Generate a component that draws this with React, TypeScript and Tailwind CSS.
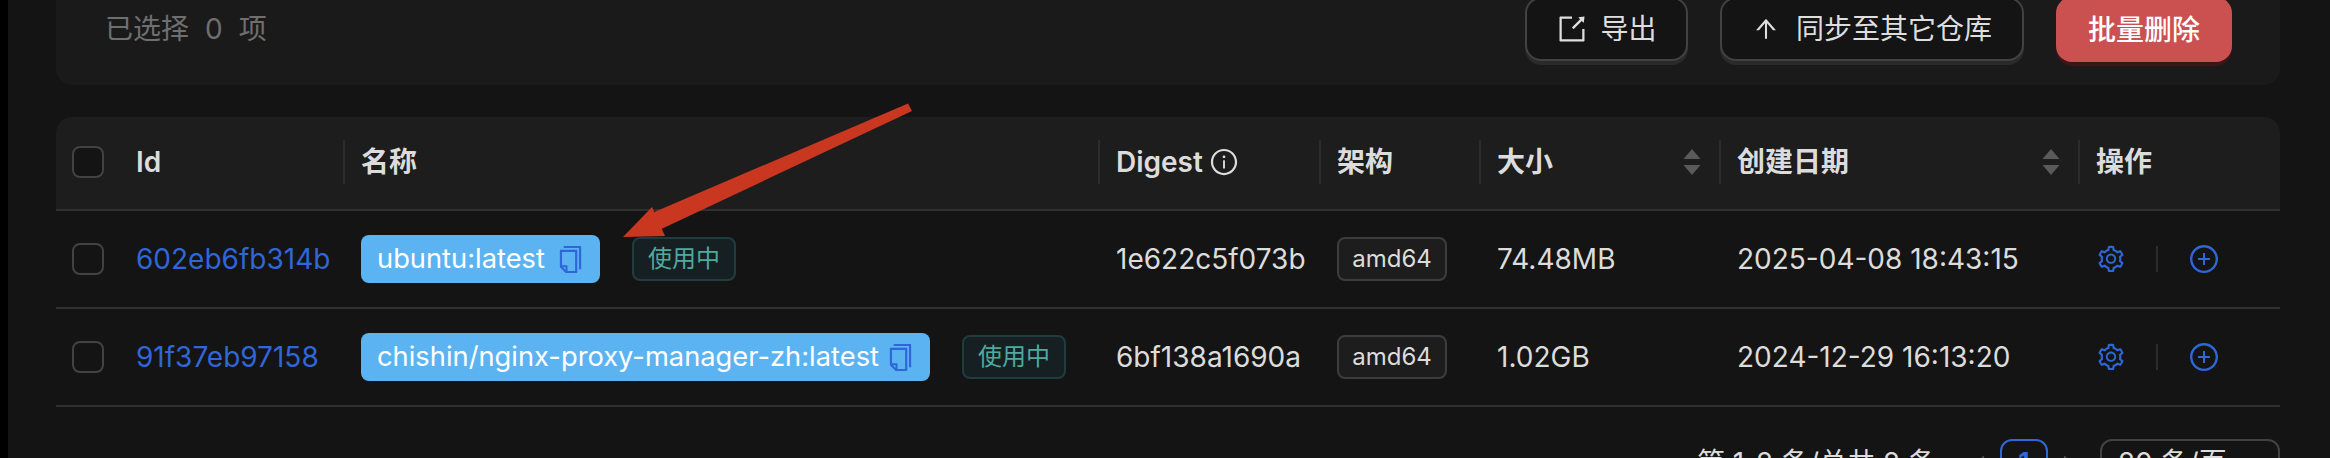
import React from "react";
import {
  AiOutlineArrowUp,
  AiOutlineCopy,
  AiOutlineDown,
  AiOutlineExport,
  AiOutlineInfoCircle,
  AiOutlineLeft,
  AiOutlinePlusCircle,
  AiOutlineRight,
  AiOutlineSetting,
} from "react-icons/ai";

const gridCols = "grid grid-cols-[80px_207px_755px_221px_160px_240px_359px_202px] items-center";

const images = [
  {
    id: "602eb6fb314b",
    name: "ubuntu:latest",
    tagGap: "gap-[10px]",
    digest: "1e622c5f073b",
    size: "74.48MB",
    created: "2025-04-08 18:43:15",
  },
  {
    id: "91f37eb97158",
    name: "chishin/nginx-proxy-manager-zh:latest",
    tagGap: "gap-[6px]",
    digest: "6bf138a1690a",
    size: "1.02GB",
    created: "2024-12-29 16:13:20",
  },
];

const Checkbox = () => (
  <div className="w-8 h-8 rounded-[8px] border-2 border-[#424242] bg-[#141414]" />
);

const SortCaret = () => (
  <svg width="18" height="26" viewBox="0 0 18 26" className="shrink-0">
    <path d="M9 0L17.5 10H.5z" fill="#5a5a5a" />
    <path d="M9 26L17.5 16H.5z" fill="#5a5a5a" />
  </svg>
);

const HeaderCell = ({ label, children }: { label: string; children?: React.ReactNode }) => (
  <div className="h-[44px] border-l-2 border-[#2c2c2c] pl-4 flex items-center justify-between pr-[18px]">
    <div className="flex items-center gap-[6px]">{label}</div>
    {children}
  </div>
);

const App: React.FC = () => {
  return (
    <div
      className="relative flex w-full h-[458px] overflow-hidden bg-[#141414] text-[28px] text-[#dcdcdc]"
      style={{ fontFamily: '"Inter", "Noto Sans CJK SC", sans-serif' }}
    >
      <div className="w-2 shrink-0 bg-black" />

      <main className="flex-1 pl-12 pr-[50px]">
        {/* Batch action bar */}
        <section className="-mt-[3px] h-[88px] bg-[#1a1a1a] rounded-b-[16px] pl-[49px] pr-12 flex items-start justify-between">
          <div className="h-[64px] flex items-center gap-4 text-[#6f6f6f]">
            <span>已选择</span>
            <span>0</span>
            <span>项</span>
          </div>
          <div className="flex items-start gap-8">
            <button className="w-[163px] h-[64px] rounded-[16px] border-2 border-[#424242] bg-[#141414] shadow-[0_4px_0_rgba(255,255,255,0.07)] flex items-center justify-center gap-3 text-[#dedede]">
              <AiOutlineExport size={32} />
              导出
            </button>
            <button className="w-[304px] h-[64px] rounded-[16px] border-2 border-[#424242] bg-[#141414] shadow-[0_4px_0_rgba(255,255,255,0.07)] flex items-center justify-center gap-4 text-[#dedede]">
              <AiOutlineArrowUp size={28} />
              同步至其它仓库
            </button>
            <button className="w-[176px] h-[65px] rounded-[16px] bg-[#cb5050] shadow-[0_4px_0_#3a1616] flex items-center justify-center font-medium text-white">
              批量删除
            </button>
          </div>
        </section>

        {/* Image table */}
        <section className="mt-8">
          <div className={`${gridCols} h-[94px] pb-[2px] bg-[#1d1d1d] rounded-t-[16px] border-b-2 border-[#303030] font-semibold`}>
            <div className="pl-4">
              <Checkbox />
            </div>
            <div>Id</div>
            <HeaderCell label="名称" />
            <div className="h-[44px] border-l-2 border-[#2c2c2c] pl-4 flex items-center gap-[6px]">
              Digest
              <AiOutlineInfoCircle size={30} className="text-[#dcdcdc]" />
            </div>
            <HeaderCell label="架构" />
            <HeaderCell label="大小">
              <SortCaret />
            </HeaderCell>
            <HeaderCell label="创建日期">
              <SortCaret />
            </HeaderCell>
            <HeaderCell label="操作" />
          </div>

          {images.map((image) => (
            <div key={image.id} className={`${gridCols} h-[98px] border-b-2 border-[#303030]`}>
              <div className="pl-4">
                <Checkbox />
              </div>
              <a className="text-[#2f66d8]">{image.id}</a>
              <div className="pl-[18px] flex items-center gap-8">
                <div className={`h-[48px] rounded-[8px] bg-[#5cb3f2] pl-4 pr-[14px] flex items-center ${image.tagGap} text-[27.3px] text-white`}>
                  {image.name}
                  <AiOutlineCopy size={31} className="text-[#2f66d8]" />
                </div>
                <div className="h-[44px] rounded-[8px] border-2 border-[#1f3d3e] bg-[#162022] px-[14px] flex items-center text-[24px] text-[#4fa99f]">
                  使用中
                </div>
              </div>
              <div className="pl-[18px]">{image.digest}</div>
              <div className="pl-[18px]">
                <div className="w-[110px] h-[44px] rounded-[8px] border-2 border-[#3d3d3d] bg-[#1d1d1d] flex items-center justify-center text-[24px]">
                  amd64
                </div>
              </div>
              <div className="pl-[18px]">{image.size}</div>
              <div className="pl-[18px]">{image.created}</div>
              <div className="pl-[18px] flex items-center text-[#2f66d8]">
                <AiOutlineSetting size={30} />
                <div className="h-[26px] w-[2px] bg-[#2c2c2c] mx-[30px]" />
                <AiOutlinePlusCircle size={32} />
              </div>
            </div>
          ))}
        </section>

        {/* Pagination */}
        <section className="mt-8 flex items-center justify-end h-[48px]">
          <span className="mr-[34px]">第 1-2 条/总共 2 条</span>
          <AiOutlineLeft size={20} className="text-[#555555]" />
          <div className="w-[48px] h-[48px] mx-[10px] rounded-[12px] border-2 border-[#2f66d8] flex items-center justify-center font-semibold text-[#2f66d8]">
            1
          </div>
          <AiOutlineRight size={20} className="text-[#555555]" />
          <div className="w-[180px] h-[48px] ml-[22px] rounded-[12px] border-2 border-[#424242] pl-4 pr-6 flex items-center justify-between">
            20 条/页
            <AiOutlineDown size={20} className="text-[#555555]" />
          </div>
        </section>
      </main>

      {/* Red annotation arrow */}
      <svg width="2330" height="458" className="absolute left-0 top-0 pointer-events-none">
        <path d="M908 103.5L912 111L655 232L645 216z" fill="#c93721" />
        <path d="M623 237L652 207L665 236z" fill="#c93721" />
      </svg>
    </div>
  );
};

export default App;
